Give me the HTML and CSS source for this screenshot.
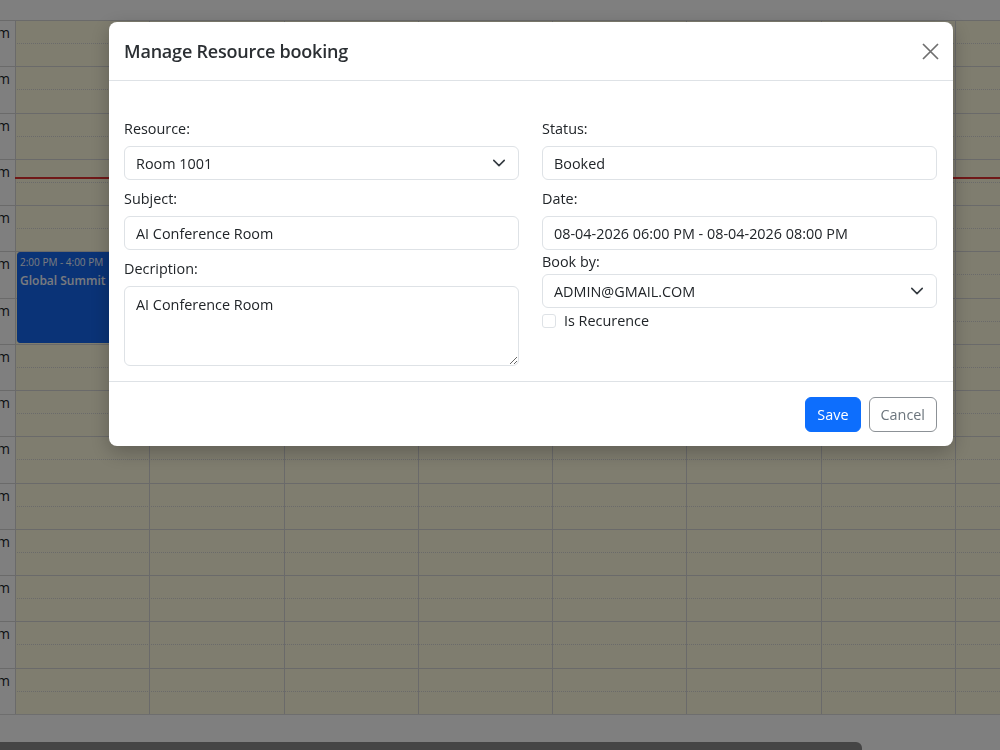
FILE: index.html
```html
<!DOCTYPE html>
<html lang="en">
<head>
  <meta charset="UTF-8" />
  <meta name="viewport" content="width=device-width, initial-scale=1.0" />
  <title>Resource Booking</title>
  <link rel="stylesheet" href="styles.css">
</head>
<body>
  <div class="calendar">
    <div class="timegrid">
      <div class="slots" id="slots"></div>
      <div class="cols" id="cols">
        <div class="now-line"></div>
      </div>
    </div>
    <div class="hscroll"></div>
  </div>

  <div class="modal-wrap">
    <div class="modal">
      <div class="modal-header">
        <h5 class="modal-title">Manage Resource booking</h5>
        <button class="btn-close" type="button" aria-label="Close">
          <svg width="17" height="17" viewBox="0 0 17 17">
            <path d="M1 1 16 16M16 1 1 16" stroke="#6f6f6f" stroke-width="1.7" fill="none" />
          </svg>
        </button>
      </div>

      <div class="modal-body">
        <form class="form-grid">
          <div class="form-col">
            <label for="resource">Resource:</label>
            <div class="select-wrap">
              <select id="resource" class="form-control">
                <option>Room 1001</option>
              </select>
              <svg class="chevron" width="14" height="14" viewBox="0 0 16 16">
                <path d="m2 5 6 6 6-6" stroke="#343a40" stroke-width="1.8" fill="none" stroke-linecap="round" stroke-linejoin="round" />
              </svg>
            </div>

            <label for="subject">Subject:</label>
            <input id="subject" class="form-control" type="text" value="AI Conference Room" />

            <label for="description">Decription:</label>
            <textarea id="description" class="form-control">AI Conference Room</textarea>
          </div>

          <div class="form-col">
            <label for="status">Status:</label>
            <input id="status" class="form-control" type="text" value="Booked" />

            <label for="date">Date:</label>
            <input id="date" class="form-control tight" type="text" value="08-04-2026 06:00 PM - 08-04-2026 08:00 PM" />

            <label for="bookby" class="tight">Book by:</label>
            <div class="select-wrap">
              <select id="bookby" class="form-control">
                <option>ADMIN@GMAIL.COM</option>
              </select>
              <svg class="chevron" width="14" height="14" viewBox="0 0 16 16">
                <path d="m2 5 6 6 6-6" stroke="#343a40" stroke-width="1.8" fill="none" stroke-linecap="round" stroke-linejoin="round" />
              </svg>
            </div>

            <div class="check">
              <input id="recurrence" type="checkbox" />
              <label for="recurrence">Is Recurence</label>
            </div>
          </div>
        </form>
      </div>

      <div class="modal-footer">
        <button class="btn btn-primary" type="button">Save</button>
        <button class="btn btn-outline" type="button">Cancel</button>
      </div>
    </div>
  </div>

  <script>
    const slots = document.getElementById("slots");
    const cols = document.getElementById("cols");

    function hourLabel(h) {
      const suffix = h < 12 ? "am" : "pm";
      const hr = h % 12 === 0 ? 12 : h % 12;
      return hr + suffix;
    }

    for (let h = 9; h < 24; h++) {
      slots.innerHTML += `
        <div class="slot major">
          <div class="slot-label"><span>${hourLabel(h)}</span></div>
          <div class="slot-lane"></div>
        </div>
        <div class="slot minor">
          <div class="slot-label"></div>
          <div class="slot-lane"></div>
        </div>`;
    }

    for (let d = 0; d < 8; d++) {
      const col = document.createElement("div");
      col.className = "col";
      if (d === 0) {
        col.innerHTML = `
          <div class="event">
            <div class="event-time">2:00 PM - 4:00 PM</div>
            <div class="event-title">Global Summit</div>
          </div>`;
      }
      cols.appendChild(col);
    }
  </script>
</body>
</html>
```

FILE: styles.css
```css
* {
  box-sizing: border-box;
}
body {
  margin: 0;
  font-family: "Open Sans", sans-serif;
  color: #212529;
  background: #fff;
  overflow: hidden;
}

/* calendar behind the dialog */
.calendar {
  padding-top: 20px;
  height: 750px;
}
.timegrid {
  display: grid;
  width: 1090px;
  border-bottom: 1px solid #ddd;
}
.slots,
.cols {
  grid-area: 1 / 1;
}
.slot {
  display: flex;
  height: 23.13px;
}
.slot-label {
  width: 15px;
  flex: none;
  display: flex;
  justify-content: flex-end;
  overflow: hidden;
  padding-right: 5px;
  padding-top: 3px;
  font-size: 14px;
  line-height: 18px;
  white-space: nowrap;
}
.slot-lane {
  flex: 1;
  background: #fffadf;
}
.slot.major .slot-label,
.slot.major .slot-lane {
  border-top: 1px solid #d4d4d4;
}
.slot.minor .slot-lane {
  border-top: 1px dotted #d4d4d4;
}
.cols {
  display: flex;
  margin-left: 15px;
  position: relative;
}
.col {
  width: 134.3px;
  flex: none;
  border-left: 1px solid #d4d4d4;
  position: relative;
}
.now-line {
  position: absolute;
  top: 157px;
  left: 0;
  right: 0;
  border-top: 2px solid #e03030;
  z-index: 2;
}
.event {
  position: absolute;
  top: 232px;
  left: 1px;
  right: 1px;
  height: 91px;
  background: #1466ee;
  border: 1px solid #1466ee;
  border-radius: 3px;
  padding: 2px 2px;
  color: #f2f6ff;
  overflow: hidden;
  white-space: nowrap;
}
.event-time {
  font-size: 10px;
  line-height: 14px;
}
.event-title {
  margin-top: 3px;
  font-size: 12px;
  font-weight: 600;
  line-height: 18px;
}
.hscroll {
  width: 862px;
  height: 12px;
  margin-top: 27px;
  background: #8a8a8a;
  border-radius: 0 6px 0 0;
}

/* dialog */
.modal-wrap {
  position: fixed;
  inset: 0;
  z-index: 10;
  background: rgba(0, 0, 0, 0.5);
  padding: 22px 0 0 109px;
}
.modal {
  width: 844px;
  background: #fff;
  border-radius: 8px;
  box-shadow: 0 6px 20px rgba(0, 0, 0, 0.25);
}
.modal-header {
  display: flex;
  align-items: center;
  justify-content: space-between;
  height: 59px;
  padding: 0 14px 0 15px;
  border-bottom: 1px solid #dee2e6;
}
.modal-title {
  margin: 0;
  font-size: 18px;
  font-weight: 600;
  letter-spacing: -0.2px;
  color: #2b2f33;
}
.btn-close {
  border: none;
  background: none;
  padding: 0;
  width: 17px;
  height: 17px;
  display: flex;
  cursor: pointer;
}
.modal-body {
  padding: 37px 16px 15px 15px;
}
.form-grid {
  display: grid;
  grid-template-columns: 1fr 1fr;
  gap: 23px;
  margin: 0;
}
label {
  display: block;
  height: 22px;
  line-height: 22px;
  margin-bottom: 6px;
  font-size: 14.4px;
}
label.tight {
  margin-bottom: 1px;
}
.form-control {
  display: block;
  width: 100%;
  height: 34px;
  margin: 0 0 8px;
  padding: 0 11px;
  font-family: inherit;
  font-size: 14.4px;
  color: #212529;
  background: #fff;
  border: 1px solid #dee2e6;
  border-radius: 6px;
  outline: none;
}
.form-control.tight {
  margin-bottom: 1px;
}
select.form-control {
  appearance: none;
  margin: 0;
}
.select-wrap {
  position: relative;
  margin-bottom: 8px;
}
.chevron {
  position: absolute;
  right: 13px;
  top: 10px;
}
textarea.form-control {
  height: 80px;
  padding: 7px 11px;
  line-height: 21px;
  resize: vertical;
  margin: 0;
}
.check {
  display: flex;
  align-items: center;
  gap: 8px;
  margin-top: -6px;
}
.check input {
  appearance: none;
  width: 14px;
  height: 14px;
  margin: 0;
  border: 1px solid #dee2e6;
  border-radius: 3px;
}
.check label {
  margin: 0;
}
.modal-footer {
  display: flex;
  justify-content: flex-end;
  gap: 8px;
  padding: 15px 16px 14px;
  border-top: 1px solid #dee2e6;
}
.btn {
  height: 35px;
  padding: 0 11px;
  font-family: inherit;
  font-size: 14.4px;
  border-radius: 6px;
  cursor: pointer;
}
.btn-primary {
  background: #0d6efd;
  border: 1px solid #0d6efd;
  color: #fff;
}
.btn-outline {
  background: #fff;
  border: 1px solid #8c9196;
  color: #6c757d;
}
```
